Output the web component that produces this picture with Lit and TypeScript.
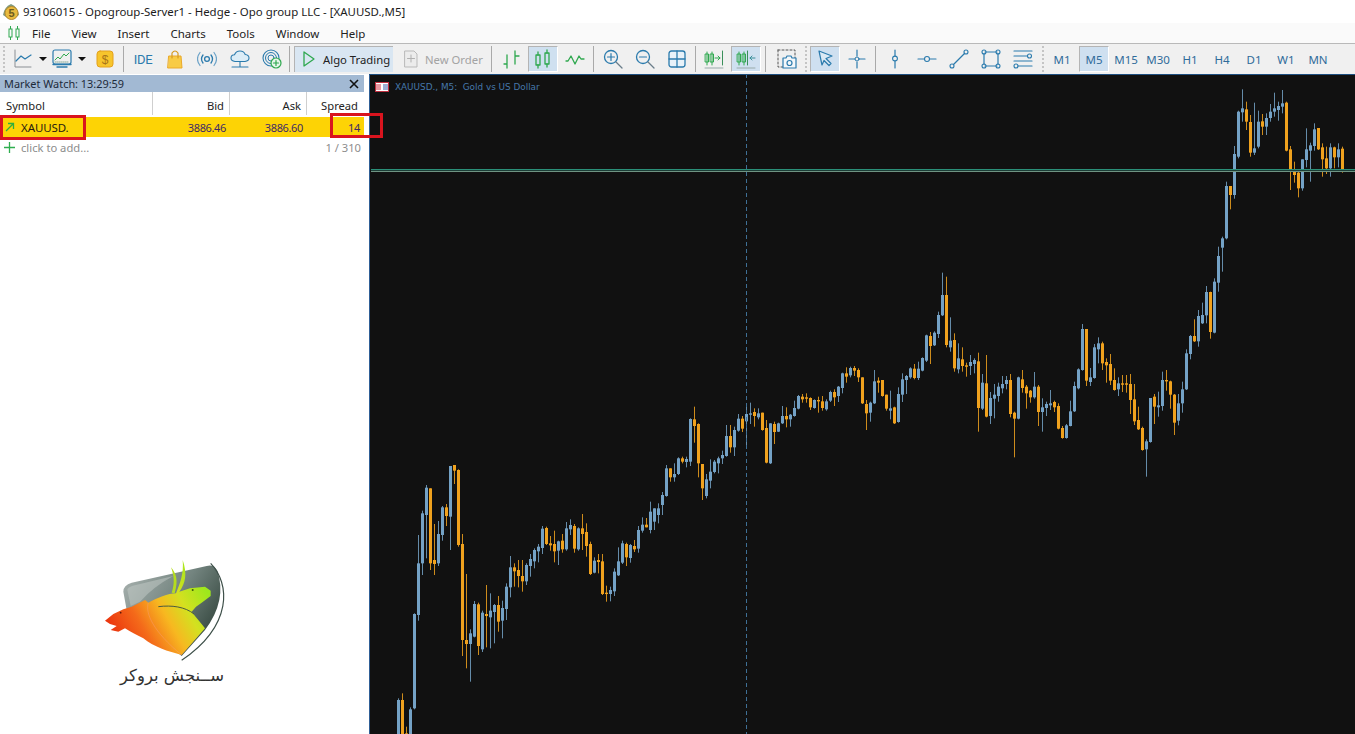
import { LitElement, html, css, svg } from "lit";
import { customElement } from "lit/decorators.js";

const seg6 = `b895,900,1100,1100 o880,900,1100,1100 o980,1000,1100,1100 b922,928,1100,1100 b640,642,925,928 b405,490,645,662 b332,340,490,525 b255,263,345,475 o265,265,490,510 o372,480,492,525 b363,402,490,498 b318,322,405,422 o312,322,348,378 b198,198,350,450 o195,195,212,252 o208,210,435,440 o402,432,720,768 o522,720,732,805 b688,700,732,845 b603,612,710,712 o608,613,738,765 b632,638,748,756 o555,642,648,742 b580,632,652,745 b612,615,636,730 o588,615,665,695 b602,624,662,715 b550,560,627,660 b468,502,562,592 o490,502,514,560 o480,510,528,562 o480,528,544,575 b490,495,544,555 b462,477,498,530 b445,450,484,505 b432,440,454,487 b378,386,444,462 o380,384,432,435 o408,430,436,452 o392,432,454,487 b422,424,452,495 o402,422,448,458 b366,385,448,452 b358,375,388,405 o372,378,446,458 b382,385,448,452 o342,385,402,450 o370,396,438,470 o425,432,522,525 b472,482,518,520 o462,480,486,520 o462,484,582,585 o557,578,582,605 b560,570,582,604 b505,515,574,588 b442,484,526,528 b422,430,488,492 o428,432,472,498 b432,435,474,488 o420,438,448,456 b378,390,446,458 b352,374,392,398 o354,374,382,382 b305,335,390,400 b325,325,365,390 b310,325,345,370`;
const seg7 = `b696,705,735,765 b615,625,708,710 o625,625,652,665 b610,642,652,665 b592,595,642,645 o590,595,605,610 b590,597,606,622 b475,477,605,618 o440,478,498,548 o490,492,610,652 o612,612,685,720 b642,658,708,715 b598,635,662,685 b600,605,636,640 b590,595,610,640 b572,585,595,612 b495,528,588,590 o495,528,562,578 b500,510,562,588 b462,476,512,515 o468,476,506,516 b438,462,484,555 b428,460,464,492 o445,456,468,500 b445,460,472,478 o458,458,510,512 o480,504,608,610 b490,490,610,612 o485,492,516,552 b488,490,515,516 b438,468,490,492 o442,468,478,502 b462,464,478,500 b422,444,468,470 b405,408,446,448 o402,410,418,428 o400,412,416,428 o412,414,442,450 b418,420,444,446 o410,420,424,458 o408,424,444,452 b418,424,448,452 b392,396,422,426 o388,396,412,438 b378,380,408,426 b338,340,384,400 o322,340,350,368 b320,324,346,352 o318,324,332,348 o325,330,352,366 o352,352,430,432 o420,432,460,510 b425,428,458,485 b330,364,430,432 o352,362,368,398 o360,360,408,410 o404,404,446,452 b392,445,452,478 o440,442,490,492 b382,402,486,488 b340,358,404,426 b345,348,360,402 b322,325,352,356 o312,326,354,358 b305,326,354,360 b292,294,332,334 b224,226,302,306 o216,228,258,312 b214,218,256,258 b155,165,222,234`;
const seg8 = `b38,105,166,168 o50,105,255,262 b172,242,262,275 o220,240,325,335 b250,295,328,340 o262,298,318,335 o308,316,318,350 b285,306,318,345 b295,300,312,340 o278,304,444,515 b342,368,446,450 o285,370,470,472 b396,414,468,492 b372,404,416,475 b368,380,408,425 b348,372,385,400 b348,360,372,388 o342,360,462,472 o455,458,476,592 b350,352,476,478 o330,358,384,398 o375,380,400,446 o390,392,412,428 b336,380,412,416 o375,380,456,498 b415,442,456,515 b425,432,444,468 b390,430,436,450 o422,426,442,456 o430,438,506,508 o498,504,534,536 b492,496,534,536 b422,454,498,499 b365,378,454,456 b325,328,385,388 b192,207,330,332 o207,207,362,378 b324,352,366,378 b252,262,354,356 b232,250,268,310 o245,250,310,330 o295,306,316,368 o282,312,362,375 o325,360,390,392 b352,370,388,408 o345,370,371,396 o345,370,371,398 o342,372,420,462 o372,418,484,495 o440,480,508,510 o500,504,570,572 b538,544,568,650 b414,414,546,548 o402,410,440,492 b395,436,442,470 b335,360,438,452 o330,360,364,392 o362,364,404,446 o402,404,488,525 b402,430,482,496 b365,388,430,458 b268,280,388,390 b225,228,282,298 o178,228,244,246 b150,168,244,260 b128,165,190,192 b78,96,166,190 o95,96,216,236 b55,65,218,220 b-40,-12,68,95`;
const seg5 = `b470,475,503,575 b305,318,475,478 o318,318,345,388 b198,222,345,356 b92,95,230,235 b28,85,97,125 o65,88,125,150 o105,126,218,230 b68,205,218,225 b92,125,200,205 o102,124,140,165 b100,114,140,165 b72,95,114,125 b38,85,95,110 b65,78,90,122 b30,70,80,100 o65,68,212,214 o198,208,272,330 o245,275,285,308 o275,278,325,352 b238,238,325,332 b145,208,240,262 b188,196,212,305 b130,148,198,212 o144,144,208,210 o190,202,238,290 o200,235,265,282 b190,202,265,290 o200,202,232,265 b190,208,232,262 o200,206,274,278`;

type Candle = { i: number; up: boolean; h: number; t: number; b: number; l: number };
function parse(src: string, start: number, oy: number): Candle[] {
  return src.split(" ").map((tok, k) => {
    const [h, t, b, l] = tok.slice(1).split(",").map((n) => oy + Number(n) / 3);
    return { i: start + k, up: tok[0] === "b", h, t, b, l };
  });
}
const candles = [
  ...parse(seg6, 0, 400),
  ...parse(seg7, 66, 260),
  ...parse(seg8, 136, 260),
  ...parse(seg5, 206, 80),
];

const UP = "#74a2c6";
const DN = "#f0a21e";
const G = "#2fa84f";
const B = "#2b7bad";

function chartMarks() {
  return candles.map((c) => {
    const x = Math.round(398.33 + 4 * c.i) - 1;
    const col = c.up ? UP : DN;
    const bh = Math.max(1.4, c.b - c.t);
    return svg`<rect x=${x + 1} y=${c.h} width="1" height=${c.l - c.h} fill=${col} opacity="0.85"/><rect x=${x} y=${c.t} width="3" height=${bh} fill=${col}/>`;
  });
}

const ic = (w: number, body: unknown) =>
  html`<svg class="ic" width=${w} height="20" viewBox="0 0 ${w} 20" fill="none" stroke-linecap="round" stroke-linejoin="round">${body}</svg>`;

const icons: Record<string, unknown> = {
  line: ic(20, svg`<path d="M2 1v17h16" stroke="#8a8f94" stroke-width="1"/><path d="M3 12l5-5 4 3 6-4" stroke="${B}" stroke-width="1.2"/>`),
  monitor: ic(20, svg`<rect x="1" y="1" width="18" height="14" rx="2" stroke="${B}" stroke-width="1.2"/><path d="M3 11l3-3 2 2 4-5 2 2 3-3" stroke="${G}"/><path d="M3 13h14" stroke="#8a9" stroke-dasharray="1 1"/><path d="M5 18h10M1 15.5h18" stroke="${B}" stroke-width="1.4"/>`),
  dollar: ic(18, svg`<rect x="1" y="2" width="16" height="16" rx="3" fill="#f7c52c" stroke="#e4a11b"/><text x="9" y="14.5" text-anchor="middle" font-size="12" font-family="Liberation Sans" fill="#a8741a" stroke="none">$</text>`),
  bag: ic(18, svg`<path d="M3 7h12l1 12H2z" fill="#f8cb45" stroke="#eaa92a"/><path d="M6 9V4q3-4 6 0v5" stroke="#d69a20" stroke-width="1.2"/>`),
  signal: ic(20, svg`<circle cx="10" cy="10" r="2.4" stroke="${B}" stroke-width="1.3"/><path d="M6 6q-3 4 0 8M14 6q3 4 0 8" stroke="${B}" stroke-width="1.3"/><path d="M3 3.5q-5 6.500 0 13M17 3.500q5 6.500 0 13" stroke="#6da3c8" stroke-width="1.2"/>`),
  cloud: ic(20, svg`<path d="M5 12.500q-4-.5-4-3.500 0-3 3.500-3.200Q6 2 10 2q4 0 5.200 3.500 3.800.5 3.800 3.500 0 3-4 3.500z" fill="#dcedf7" stroke="${B}" stroke-width="1.1"/><path d="M10 13v5M2 18h16" stroke="${B}" stroke-width="1.1"/>`),
  globe: ic(20, svg`<circle cx="9" cy="9" r="8" stroke="${B}" stroke-width="1.1"/><circle cx="9" cy="9" r="5.500" stroke="${B}"/><circle cx="9" cy="9" r="3" stroke="${B}"/><circle cx="14" cy="14" r="5" fill="#e6f5ea" stroke="${G}" stroke-width="1.2"/><path d="M14 11.500v5M11.500 14h5" stroke="${G}" stroke-width="1.2"/>`),
  play: ic(14, svg`<path d="M2 2l10 7-10 7z" stroke="${G}" stroke-width="1.300"/>`),
  order: ic(14, svg`<path d="M1 2h9l3 3v13H1z" fill="#ececec" stroke="#b9b9b9"/><path d="M7 6v7M3.500 9.500h7" stroke="#b0b0b0"/>`),
  bars: ic(20, svg`<path d="M6 6v13M3 15h3M14 2v13M14 7h4" stroke="${G}" stroke-width="1.300"/>`),
  candle: ic(18, svg`<rect x="2" y="6" width="4" height="10" stroke="${G}" stroke-width="1.300"/><path d="M4 3v3M4 16v3M13 1v3M13 15v3" stroke="${G}" stroke-width="1.300"/><rect x="11" y="4" width="4" height="11" stroke="${G}" stroke-width="1.300"/>`),
  zig: ic(20, svg`<path d="M1 12h2l3-5 4 8 4-8 2 3h3" stroke="${G}" stroke-width="1.300"/>`),
  zoomIn: ic(20, svg`<circle cx="8" cy="8" r="6.500" stroke="${B}" stroke-width="1.300"/><path d="M13 13l6 6" stroke="#6a7d8a" stroke-width="1.300"/><path d="M8 4.500v7M4.500 8h7" stroke="${B}" stroke-width="1.200"/>`),
  zoomOut: ic(20, svg`<circle cx="8" cy="8" r="6.500" stroke="${B}" stroke-width="1.300"/><path d="M13 13l6 6" stroke="#6a7d8a" stroke-width="1.300"/><path d="M4.500 8h7" stroke="${B}" stroke-width="1.200"/>`),
  grid: ic(18, svg`<rect x="1" y="2" width="16" height="16" rx="2.500" fill="#e8f2f9" stroke="${B}" stroke-width="1.300"/><path d="M9 2v16M1 10h16" stroke="${B}" stroke-width="1.300"/>`),
  shiftR: ic(20, svg`<path d="M3 3v13M8 3v13" stroke="${G}"/><rect x="1.500" y="5" width="3" height="8" stroke="${G}"/><rect x="6.500" y="5" width="3" height="8" stroke="${G}"/><path d="M11 9h5M14 7l2 2-2 2" stroke="${G}"/><path d="M18.500 2v14" stroke="#3a8f5a"/><path d="M1 19h18" stroke="#9aa"/>`),
  shiftL: ic(20, svg`<path d="M3 3v13M8 3v13" stroke="${G}"/><rect x="1.500" y="5" width="3" height="8" stroke="${G}"/><rect x="6.500" y="5" width="3" height="8" stroke="${G}"/><path d="M11.500 2v14" stroke="#3a8f5a"/><path d="M14 9h5M16 7l-2 2 2 2" stroke="#3a8f9a"/><path d="M1 19h18" stroke="#9aa"/>`),
  shot: ic(20, svg`<path d="M1 1h17v10M1 1v17h5" stroke="#555" stroke-dasharray="2 2"/><path d="M6 9h3l1-2h4l1 2h4v10H6z" fill="#f3f7fa" stroke="${B}" stroke-width="1.200"/><circle cx="12.500" cy="14" r="2.500" stroke="${B}" stroke-width="1.200"/>`),
  cursor: ic(18, svg`<path d="M3 2l13 5-6 2.500 5 5-2 2-5-5L6 16z" fill="#dce9f4" stroke="${B}" stroke-width="1.200"/>`),
  cross: ic(18, svg`<path d="M9 1v6M9 13v6M1 10h6M11 10h6" stroke="${B}" stroke-width="1.200"/><circle cx="9" cy="10" r="2" stroke="${B}"/>`),
  vline: ic(12, svg`<path d="M6 1v6M6 12v7" stroke="${B}" stroke-width="1.200"/><circle cx="6" cy="9.500" r="2.400" stroke="${B}" stroke-width="1.100"/>`),
  hline: ic(20, svg`<path d="M1 10h6M13 10h6" stroke="${B}" stroke-width="1.200"/><circle cx="10" cy="10" r="2.500" stroke="${B}" stroke-width="1.100"/>`),
  trend: ic(20, svg`<circle cx="3" cy="17" r="2" stroke="${B}" stroke-width="1.100"/><circle cx="17" cy="3" r="2" stroke="${B}" stroke-width="1.100"/><path d="M4.500 15.500L15.500 4.500" stroke="${B}" stroke-width="1.200"/>`),
  rect: ic(20, svg`<path d="M4 3h12M4 17h12M3 4.500v11M17 4.500v11" stroke="${B}" stroke-width="1.200"/><circle cx="3" cy="3" r="2" stroke="${B}" stroke-width="1.100"/><circle cx="17" cy="3" r="2" stroke="${B}" stroke-width="1.100"/><circle cx="3" cy="17" r="2" stroke="${B}" stroke-width="1.100"/><circle cx="17" cy="17" r="2" stroke="${B}" stroke-width="1.100"/>`),
  channel: ic(20, svg`<path d="M1 2h18M1 7h13M1 12h18M5 17h14" stroke="${B}" stroke-width="1.200"/><circle cx="16.500" cy="7" r="2" stroke="${B}" stroke-width="1.100"/><circle cx="3" cy="17" r="2" stroke="${B}" stroke-width="1.100"/>`),
};

@customElement("app-root")
export class AppRoot extends LitElement {
  static styles = css`
    :host { display: block; position: relative; width: 1355px; height: 734px; overflow: hidden; background: #fff; font-family: "Noto Sans", "Open Sans", sans-serif; font-size: 11.5px; color: #222; }
    .root { display: flex; flex-direction: column; height: 734px; }
    .title { height: 23px; display: flex; align-items: center; gap: 3px; padding-left: 2px; background: #fff; font-size: 11.45px; color: #1c1c1c; white-space: nowrap; }
    .menu { height: 20px; display: flex; align-items: center; gap: 21px; padding-left: 8px; background: #fafafa; border-bottom: 1px solid #b9b9b9; }
    .menu svg { margin-right: -9px; }
    .tools { height: 30px; display: flex; align-items: center; background: #f0f0f0; white-space: nowrap; }
    .slot { width: 32px; height: 26px; flex: none; display: flex; align-items: center; justify-content: center; box-sizing: border-box; }
    .face { width: 30px; height: 26px; display: flex; align-items: center; justify-content: center; box-sizing: border-box; }
    .on .face { background: #cfe0f0; border-left: 1px solid #b4b4b4; border-top: 1px solid #b4b4b4; border-right: 1px solid #fff; border-bottom: 1px solid #fff; }
    .sep { width: 1px; height: 26px; flex: none; background: #a9a9a9; }
    .grip { width: 0; height: 26px; flex: none; border-left: 2px dotted #c4c4c4; }
    .ic { display: block; flex: none; }
    .arrow { width: 0; height: 0; border: 4px solid transparent; border-top: 4px solid #111; border-bottom: 0; flex: none; }
    .combo { display: flex; align-items: center; gap: 6px; flex: none; box-sizing: border-box; }
    .c1 { width: 42px; padding-left: 8px; } .c2 { width: 42px; padding-left: 5px; }
    .ide { color: #2b7bad; font-family: "Roboto", sans-serif; font-size: 13px; letter-spacing: -.3px; }
    .btn { display: flex; align-items: center; height: 26px; box-sizing: border-box; flex: none; font-size: 11.3px; }
    .algo { width: 99px; background: #d9e6f2; padding-left: 7px; gap: 7px; border-left: 1px solid #b4b4b4; border-top: 1px solid #b4b4b4; }
    .new { width: 90px; color: #a3a3a3; gap: 7px; padding-left: 7px; }
    .tf { color: #2f6b9a; font-size: 11.5px; }
    .m1 { margin-left: 1px; } .m2 { margin-left: 2px; } .m3 { margin-left: 3px; } .m4 { margin-left: 4px; } .m5 { margin-left: 5px; }
    .main { flex: 1; display: flex; min-height: 0; }
    .panel { width: 369px; flex: none; display: flex; flex-direction: column; background: #fff; padding-top: 1px; box-sizing: border-box; }
    .phead { height: 17px; width: 364px; display: flex; align-items: center; justify-content: space-between; padding: 0 5px 0 4px; box-sizing: border-box; background: #a2b9d3; color: #1d2a3a; font-size: 10.9px; }
    .row { display: grid; grid-template-columns: 153px 77px 77px 57px; width: 364px; align-items: center; white-space: nowrap; }
    .cell { text-align: right; padding-right: 5px; box-sizing: border-box; }
    .cell.l { text-align: left; padding: 0 0 0 6px; display: flex; align-items: center; gap: 5px; }
    .hrow { height: 23px; margin-bottom: 2px; }
    .hrow .cell { height: 23px; line-height: 27px; border-right: 1px solid #cfcfcf; font-size: 11.2px; color: #222; }
    .hrow .cell:last-child { border-right: 0; padding-right: 6px; }
    .hrow .cell.l { display: block; }
    .yrow { height: 20px; background: #fdd305; color: #3d2a68; font-size: 11px; letter-spacing: -.35px; }
    .yrow .cell.l { color: #2a1c10; font-size: 11.5px; letter-spacing: -.1px; gap: 6px; padding-left: 5px; }
    .yrow .cell:not(.l) { padding-right: 4px; }
    .grow { height: 20px; color: #8d8d8d; font-size: 11.2px; }
    .grow .cell.l { gap: 6px; padding-left: 4px; }
    .grow .cell:last-child { padding-right: 3px; }
    .logo { display: flex; flex-direction: column; align-items: center; width: 150px; margin: 393px 0 0 90px; }
    .brand { font-family: "DejaVu Sans", sans-serif; font-size: 16.5px; line-height: 16px; color: #333; direction: rtl; margin: -22px 0 0 14px; white-space: nowrap; }
    .chart { flex: 1; min-width: 0; position: relative; background: #111; overflow: hidden; }
    .chart > svg { display: block; }
    .legend { position: absolute; left: 6px; top: 8px; display: flex; align-items: center; gap: 6px; color: #4678ab; font-family: "DejaVu Sans", sans-serif; font-size: 8.85px; white-space: pre; }
    .mark { position: absolute; border: 3px solid #d9141e; box-sizing: border-box; }
    .m-a { left: 0; top: 115px; width: 86px; height: 25px; }
    .m-b { left: 330px; top: 113px; width: 53px; height: 25px; }
  `;

  private slot(name: string, on = false, cls = "") {
    return html`<div class="slot ${on ? "on" : ""} ${cls}"><div class="face">${icons[name]}</div></div>`;
  }
  private tf(t: string, on = false) {
    return html`<div class="slot ${on ? "on" : ""}"><div class="face tf">${t}</div></div>`;
  }

  render() {
    return html`<div class="root">
      <div class="title">
        <svg width="18" height="18" viewBox="0 0 18 18"><path d="M1 12q1-8 8-11 7 3 8 11-8 7-16 0z" fill="#7f9a80"/><circle cx="9.500" cy="10" r="6.500" fill="#e8bb3f" stroke="#b8892a"/><text x="9.500" y="14" text-anchor="middle" font-size="11" font-weight="700" font-family="Liberation Sans" fill="#6d5a20">5</text></svg>
        <span>93106015 - Opogroup-Server1 - Hedge - Opo group LLC - [XAUUSD.,M5]</span>
      </div>
      <div class="menu">
        <svg width="12" height="14" viewBox="0 0 12 14" fill="none" stroke="${G}" stroke-width="1"><rect x="1" y="3" width="3" height="8"/><rect x="8" y="3" width="3" height="8"/><path d="M2.500 0v3M2.500 11v3M9.500 0v3M9.500 11v3"/></svg>
        <span>File</span><span>View</span><span>Insert</span><span>Charts</span><span>Tools</span><span>Window</span><span>Help</span>
      </div>
      <div class="tools">
        <div class="grip m3"></div>
        <div class="combo c1">${icons.line}<div class="arrow"></div></div>
        <div class="combo c2">${icons.monitor}<div class="arrow"></div></div>
        ${this.slot("dollar")}
        <div class="sep m2"></div>
        <div class="slot m3"><div class="face ide">IDE</div></div>
        ${this.slot("bag")}${this.slot("signal")}${this.slot("cloud", false, "m1")}${this.slot("globe")}
        <div class="sep m1"></div>
        <div class="btn algo m4">${icons.play}<span>Algo Trading</span></div>
        <div class="btn new m4">${icons.order}<span>New Order</span></div>
        <div class="sep m4"></div>
        ${this.slot("bars", false, "m3")}${this.slot("candle", true)}${this.slot("zig")}
        <div class="sep m2"></div>
        ${this.slot("zoomIn", false, "m3")}${this.slot("zoomOut")}${this.slot("grid")}
        <div class="sep m2"></div>
        ${this.slot("shiftR", false, "m2")}${this.slot("shiftL", true)}
        <div class="sep m3"></div>
        ${this.slot("shot", false, "m5")}
        <div class="grip m2"></div>
        ${this.slot("cursor", true, "m2")}${this.slot("cross")}
        <div class="sep m2"></div>
        ${this.slot("vline", false, "m3")}${this.slot("hline")}${this.slot("trend")}${this.slot("rect")}${this.slot("channel")}
        <div class="grip m3"></div>
        <div class="m2"></div>
        ${this.tf("M1")}${this.tf("M5", true)}${this.tf("M15")}${this.tf("M30")}${this.tf("H1")}${this.tf("H4")}${this.tf("D1")}${this.tf("W1")}${this.tf("MN")}
      </div>
      <div class="main">
        <div class="panel">
          <div class="phead"><span>Market Watch: 13:29:59</span>
            <svg width="10" height="10" viewBox="0 0 10 10" stroke="#111" stroke-width="1.600"><path d="M1 1l8 8M9 1l-8 8"/></svg>
          </div>
          <div class="row hrow"><div class="cell l">Symbol</div><div class="cell">Bid</div><div class="cell">Ask</div><div class="cell">Spread</div></div>
          <div class="row yrow">
            <div class="cell l"><svg width="10" height="10" viewBox="0 0 10 10" fill="none" stroke="#2fae3f" stroke-width="1.300"><path d="M1 9l7-7M3 1.500h5.500V7"/></svg><span>XAUUSD.</span></div>
            <div class="cell">3886.46</div><div class="cell">3886.60</div><div class="cell">14</div>
          </div>
          <div class="row grow">
            <div class="cell l"><svg width="11" height="11" viewBox="0 0 11 11" stroke="#2fae4f" stroke-width="1.300"><path d="M5.500 0v11M0 5.500h11"/></svg><span>click to add...</span></div>
            <div class="cell"></div><div class="cell"></div><div class="cell">1 / 310</div>
          </div>
          <div class="logo">
            <svg width="150" height="140" viewBox="0 0 450 420" fill="none">
              <defs>
                <linearGradient id="sh" x1="120" y1="70" x2="360" y2="225" gradientUnits="userSpaceOnUse"><stop offset="0" stop-color="#a3adaa"/><stop offset=".55" stop-color="#73847f"/><stop offset="1" stop-color="#3e5048"/></linearGradient>
                <linearGradient id="bd" x1="70" y1="270" x2="345" y2="115" gradientUnits="userSpaceOnUse"><stop offset="0" stop-color="#ea2f0d"/><stop offset=".3" stop-color="#f46a1a"/><stop offset=".55" stop-color="#f7b820"/><stop offset=".75" stop-color="#d4e020"/><stop offset="1" stop-color="#9ee81c"/></linearGradient>
              </defs>
              <path d="M100 125Q100 105 125 98L350 48Q372 42 382 62Q412 150 345 240L275 318L110 180z" fill="url(#sh)"/>
              <path d="M112 120Q112 112 128 107L250 78Q190 110 150 155L122 168z" fill="#c3cbc8" opacity=".5"/>
              <path d="M362 40C420 100 430 225 275 331" stroke="#3d4f49" stroke-width="3.500"/>
              <path d="M45 212L70 192L100 178L125 170L165 150L175 158C200 145 235 130 258 130C270 100 282 70 278 30C292 70 287 100 268 125L300 115L345 110L362 122L362 138L335 158L318 170L305 185C320 205 335 220 345 235L275 315C235 305 190 290 160 265C140 255 120 245 105 235L85 245L62 240L80 228L60 222z" fill="url(#bd)"/>
              <path d="M243 52C258 70 266 90 254 130L245 128C255 100 252 75 243 52z" fill="#b5dc1e"/>
              <path d="M205 170C245 165 285 170 312 192" stroke="#4a5a40" stroke-width="3"/>
              <path d="M175 158C165 190 190 245 275 315" stroke="#f9a08a" stroke-width="2" opacity=".55"/>
              <circle cx="92" cy="188" r="2.500" fill="#5a1a0a"/><circle cx="308" cy="120" r="3" fill="#3a5a10"/>
            </svg>
            <div class="brand">ســنجش بروکر</div>
          </div>
        </div>
        <div class="chart">
          <svg width="986" height="660" viewBox="369 74 986 660">
            ${chartMarks()}
            <rect x="371" y="169" width="984" height="1" fill="#2a8f78"/>
            <rect x="371" y="170" width="984" height="1" fill="#1c3d36"/>
            <rect x="371" y="171" width="984" height="1" fill="#6f9483"/>
            <path d="M746.500 74V734" stroke="#3f7096" stroke-dasharray="4 3"/>
            <path d="M369.500 74V734" stroke="#2f5f96"/>
            <path d="M369 74.500H1355" stroke="#1e4f80"/>
          </svg>
          <div class="legend">
            <svg width="14" height="10" viewBox="0 0 14 10"><rect width="14" height="10" fill="#fff"/><rect x=".5" y=".5" width="13" height="9" fill="none" stroke="#c03040"/><path d="M1 3h5M1 5h5M1 7h5" stroke="#d03040"/><path d="M8 3h5M8 5h5M8 7h5" stroke="#3a5fa8"/></svg>
            <span>XAUUSD., M5:  Gold vs US Dollar</span>
          </div>
        </div>
      </div>
      <div class="mark m-a"></div>
      <div class="mark m-b"></div>
    </div>`;
  }
}
